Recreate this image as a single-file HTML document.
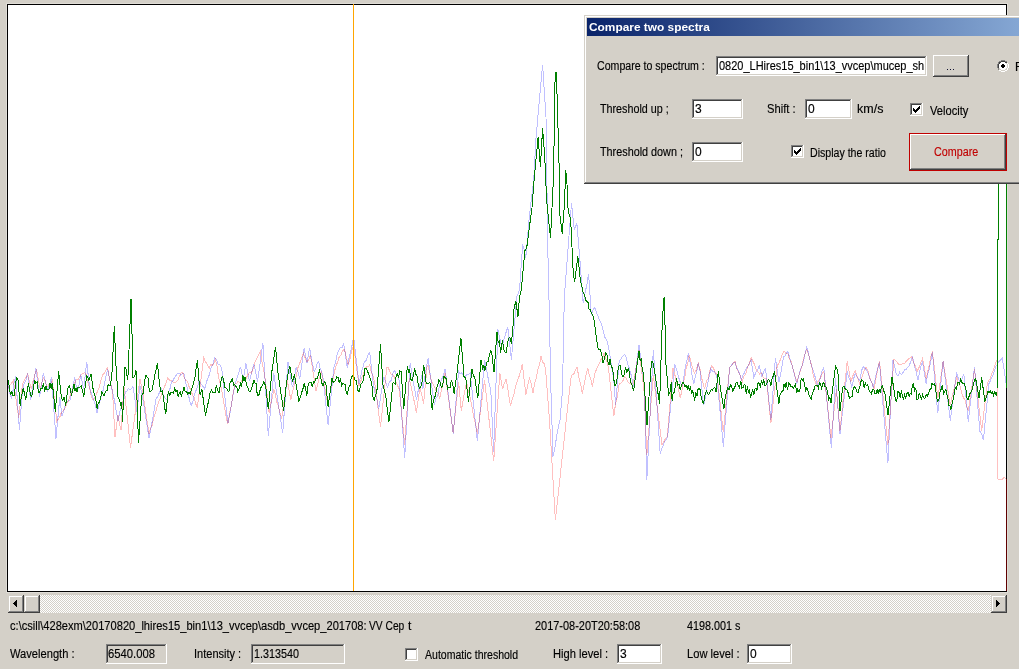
<!DOCTYPE html>
<html><head><meta charset="utf-8">
<style>
*{margin:0;padding:0}
html,body{width:1019px;height:669px;overflow:hidden;background:#d4d0c8;font-family:"Liberation Sans",sans-serif}
.t{position:absolute;white-space:pre;line-height:20px;transform-origin:0 0;-webkit-text-stroke:0.15px currentColor}
.tb{-webkit-text-stroke:0}
svg{position:absolute;left:0;top:0}
</style></head><body>
<svg width="1019" height="669" shape-rendering="crispEdges">
<defs>
<clipPath id="cp"><rect x="8" y="5" width="999" height="586"/></clipPath>
<pattern id="chk" x="0" y="0" width="2" height="2" patternUnits="userSpaceOnUse"><rect width="2" height="2" fill="#fff"/><rect width="1" height="1" fill="#d4d0c8"/><rect x="1" y="1" width="1" height="1" fill="#d4d0c8"/></pattern>
<linearGradient id="tg" gradientUnits="userSpaceOnUse" x1="587" y1="0" x2="1135" y2="0"><stop offset="0" stop-color="#0a246a"/><stop offset="1" stop-color="#a6caf0"/></linearGradient>
</defs>
<rect x="6" y="3" width="1002" height="590" fill="#e0ddd7"/><rect x="7" y="4" width="1000" height="588" fill="#000"/><rect x="8" y="5" width="998" height="586" fill="#fff"/>
<g clip-path="url(#cp)" fill="none" stroke-width="1" shape-rendering="crispEdges">
<g style="mix-blend-mode:multiply"><polyline points="7.5,380.0 9.3,390.8 11.2,398.0 12.7,392.7 14.2,382.0 15.7,376.6 19.4,429.6 22.4,390.8 24.1,383.4 25.9,380.7 27.6,373.6 30.6,399.8 32.4,390.3 34.1,379.5 35.9,368.4 39.6,396.8 43.3,373.6 44.8,378.6 46.3,385.5 47.8,390.8 49.6,384.5 51.5,377.4 56.0,438.6 59.8,396.8 62.0,416.2 63.5,412.1 65.0,405.9 66.5,402.8 68.3,401.0 70.2,399.8 71.7,391.9 73.2,385.8 74.7,377.4 76.2,386.1 77.7,390.8 79.2,384.4 80.7,374.4 82.2,382.0 83.7,389.3 86.7,361.7 89.6,387.8 91.1,392.7 92.6,397.0 94.1,401.2 95.6,406.2 97.1,413.2 98.6,406.9 100.1,400.2 101.6,394.4 103.1,390.3 104.6,382.6 106.1,376.0 107.6,369.1 109.4,377.9 111.3,386.3 113.0,393.8 114.7,401.6 116.3,411.4 118.0,420.7 119.8,412.0 121.7,406.2 123.6,400.9 125.4,391.7 126.9,391.4 128.4,388.4 130.0,390.2 131.5,388.8 133.0,386.6 136.8,412.0 140.0,385.6 142.7,398.2 149.0,437.7 150.8,428.8 152.6,419.6 154.3,409.1 156.1,398.2 157.9,396.4 159.7,391.6 161.5,389.2 163.3,394.7 165.1,398.2 166.9,400.0 168.4,392.6 169.9,389.0 171.4,382.0 173.0,380.6 174.6,377.4 176.1,375.4 177.7,373.1 179.3,373.3 180.8,375.2 182.4,373.8 184.0,374.0 185.8,383.2 187.6,389.1 189.3,399.1 191.1,405.4 192.7,402.0 194.3,395.2 196.0,390.6 197.6,386.9 199.2,380.2 201.0,384.1 202.8,386.1 204.6,389.2 206.2,382.9 207.9,378.0 209.6,374.3 211.2,366.9 212.8,364.7 214.5,357.8 216.3,359.3 218.1,364.4 219.8,364.5 221.6,367.7 227.9,423.3 229.7,415.3 231.5,404.4 233.3,393.7 235.1,383.8 236.9,378.2 238.7,373.1 240.5,366.8 243.2,380.2 245.9,363.2 247.7,372.5 249.5,381.1 251.7,371.8 253.9,364.1 255.7,371.9 257.5,382.0 262.9,342.6 268.3,435.9 273.7,373.1 282.7,433.2 288.0,362.3 289.5,370.7 291.1,380.8 292.6,387.4 294.4,378.0 296.1,367.7 297.9,371.8 299.7,379.3 304.2,348.0 306.9,363.2 309.6,348.0 311.1,357.0 312.6,364.4 314.1,371.3 315.6,369.6 317.1,363.5 318.6,361.4 320.1,368.0 321.6,371.0 323.1,378.4 328.1,425.1 333.8,367.7 335.3,362.9 336.8,356.0 338.3,351.5 340.1,347.7 341.9,347.7 343.7,343.5 347.3,367.7 348.9,358.3 350.5,352.1 352.0,345.6 353.6,336.3 359.0,383.8 360.8,375.6 362.5,368.3 364.3,362.3 366.1,360.5 367.9,355.4 369.7,352.4 373.3,383.8 375.1,393.1 376.9,398.7 378.7,409.0 380.5,397.7 382.3,386.2 384.1,376.7 385.9,382.7 387.7,387.4 389.5,381.5 391.2,380.7 393.0,372.8 394.8,370.4 396.3,374.9 397.8,375.6 399.3,381.1 404.7,458.0 410.1,363.2 411.7,371.4 413.2,382.9 414.8,389.4 416.4,400.0 418.2,390.6 420.0,383.8 421.8,374.9 422.7,389.2 424.5,379.8 426.2,368.4 428.0,358.7 428.1,358.7 434.4,405.4 435.9,398.3 437.5,396.8 439.0,388.2 440.5,382.5 442.0,378.5 443.6,374.3 445.1,368.6 453.2,434.0 458.6,371.3 460.2,373.8 461.8,372.9 463.3,375.4 464.9,377.6 466.7,374.2 468.4,374.4 470.2,373.1 477.4,441.3 484.6,359.6 486.2,368.3 487.7,375.8 489.2,384.0 490.8,390.0 493.6,452.0 497.9,329.2 499.7,338.3 501.5,345.4 503.1,342.3 504.6,337.2 506.2,331.8 507.8,327.4 511.4,359.7 516.8,296.9 519.5,290.0 522.7,244.5 524.2,250.1 525.8,257.9 529.3,216.7 533.8,179.0 535.9,139.7 539.2,101.6 542.6,64.6 546.0,117.3 547.1,200.0 548.2,270.0 549.1,303.2 550.9,390.0 553.0,456.5 554.8,448.0 556.5,437.5 558.2,427.5 560.0,420.0 562.5,390.0 564.3,296.9 571.5,203.2 574.2,229.2 576.9,223.8 579.6,256.1 583.2,303.2 585.0,293.1 586.8,285.0 588.6,273.6 591.3,314.9 593.0,309.8 594.8,307.7 596.4,312.3 598.0,315.9 599.7,320.7 601.3,323.5 602.9,329.2 603.0,330.0 604.8,337.2 606.6,339.8 608.4,346.1 613.8,380.2 615.6,405.4 619.2,360.5 621.0,358.8 622.8,356.0 624.6,354.2 626.1,356.8 627.6,363.4 629.1,367.7 630.6,372.8 632.1,379.1 633.6,387.4 639.0,345.3 644.3,383.8 646.8,480.0 653.3,349.7 660.2,454.0 661.7,448.5 663.2,445.4 664.7,441.5 666.2,440.1 667.7,435.9 674.8,364.1 676.6,369.5 678.4,376.8 680.2,382.0 682.0,385.6 683.6,379.5 685.1,368.4 686.7,361.2 688.3,353.3 690.1,362.5 691.9,374.0 693.7,383.8 695.2,377.4 696.7,371.3 698.2,363.2 700.0,371.3 703.6,405.4 705.4,397.0 707.2,386.0 709.0,377.5 710.8,368.6 712.3,371.0 713.9,371.1 715.5,373.5 717.0,377.6 723.3,446.6 729.6,367.7 731.4,365.5 733.2,362.5 735.0,362.3 736.6,367.7 738.1,370.2 739.7,374.1 741.3,380.2 742.9,375.5 744.6,372.3 746.2,368.8 747.8,366.5 749.5,362.9 751.1,359.6 753.8,377.6 755.6,372.9 757.4,370.4 759.2,365.9 761.9,376.7 763.7,371.5 765.5,368.6 770.9,419.7 775.4,357.8 778.9,382.0 780.4,375.3 781.9,367.1 783.4,356.9 784.9,356.0 786.4,353.0 787.9,351.5 789.4,356.9 790.9,362.6 792.4,365.9 793.9,372.7 795.4,378.5 796.9,383.8 798.7,376.3 800.5,369.6 802.3,365.0 803.8,360.2 805.3,352.5 806.8,347.0 808.6,353.6 810.3,361.7 812.1,367.0 813.9,373.1 815.7,378.5 817.5,385.6 819.1,383.1 820.6,376.1 822.2,370.3 823.8,367.7 831.4,448.3 835.5,378.4 840.0,434.0 847.2,371.3 848.7,377.4 850.2,380.4 851.7,387.4 853.5,379.5 855.2,373.1 856.7,376.8 858.2,378.5 859.7,380.2 862.4,367.7 863.9,366.7 865.4,369.3 866.9,370.4 868.5,374.3 870.0,378.8 871.6,382.0 873.2,387.4 874.8,381.5 876.4,373.1 877.9,367.7 879.5,362.3 887.9,463.2 892.9,359.6 894.7,366.7 896.5,374.8 898.1,376.1 899.6,372.2 901.2,374.5 902.8,373.0 904.4,370.0 906.0,369.7 907.5,367.2 909.1,365.9 910.9,361.3 912.6,356.9 914.4,365.7 916.2,372.0 918.0,380.2 919.5,372.4 921.0,366.2 922.5,361.4 926.1,383.8 927.7,374.3 929.2,369.5 930.8,360.8 932.4,352.4 937.8,413.4 943.1,361.4 950.3,420.6 956.6,372.2 958.4,378.9 960.2,382.0 962.0,378.8 963.8,374.0 968.3,421.5 974.5,366.8 979.9,431.3 981.6,433.7 983.4,440.0 988.9,383.8 990.7,380.0 992.5,376.0 994.3,371.3 996.1,365.9 997.6,363.9 999.2,361.3 1000.8,359.7 1002.3,357.8 1006.0,383.0" stroke="#c0c0ff"/></g>
<g style="mix-blend-mode:multiply"><polyline points="7.5,389.3 9.5,385.3 11.4,383.5 13.4,380.3 18.7,417.7 22.4,384.8 24.1,380.5 25.9,377.7 27.6,373.6 29.5,382.0 31.4,389.3 33.1,381.1 34.9,374.4 36.6,369.9 38.5,380.9 40.3,389.3 41.8,382.7 43.3,378.0 44.8,379.7 46.3,385.5 47.8,386.3 49.3,384.2 50.8,383.6 52.3,380.3 56.8,421.4 58.3,418.9 59.8,417.1 61.3,412.7 62.8,411.7 65.0,407.8 67.2,402.8 68.7,400.4 70.2,395.1 71.7,392.1 73.2,387.9 74.7,383.3 76.4,379.3 78.1,379.9 79.7,377.0 81.4,374.4 82.9,373.6 84.5,372.5 86.0,374.4 87.7,382.2 89.3,387.0 90.9,394.3 92.6,399.8 94.1,398.8 95.6,395.7 97.1,392.3 99.1,388.0 101.0,379.9 103.0,374.4 104.5,373.3 106.1,369.6 107.6,367.6 109.8,380.2 112.0,389.3 113.0,400.0 115.0,437.0 118.0,415.0 119.5,424.0 121.0,430.0 124.0,386.6 124.0,386.6 130.5,447.6 137.0,400.0 140.0,379.3 141.5,385.8 143.0,394.0 144.5,403.6 149.0,434.1 150.6,427.6 152.2,425.2 153.8,417.7 155.4,413.1 157.0,407.2 158.5,402.2 160.1,398.8 161.6,394.1 163.2,389.7 164.7,386.4 166.3,382.2 167.8,377.6 169.4,380.1 171.0,380.1 172.7,382.0 174.3,382.5 175.9,382.0 177.7,380.7 179.5,376.2 181.3,372.2 182.9,373.1 184.4,378.1 186.0,380.7 187.6,381.1 189.2,387.1 190.9,390.1 192.5,395.0 194.1,397.3 195.8,404.2 197.4,407.2 203.7,357.8 205.5,361.7 207.3,364.1 209.1,368.6 210.7,364.6 212.2,365.5 213.8,363.8 215.4,359.6 217.0,366.0 218.5,377.0 220.1,383.5 221.7,390.5 223.2,399.2 224.8,409.1 226.3,417.6 227.9,424.2 229.7,412.3 231.5,404.5 233.3,392.1 235.1,383.8 236.6,383.8 238.1,381.3 239.6,382.6 241.1,382.1 242.6,379.3 244.1,378.4 245.9,379.1 247.7,375.0 249.5,372.7 251.3,373.1 253.1,369.2 254.9,362.6 256.6,358.9 258.4,355.5 260.2,351.5 262.0,362.1 263.8,370.5 265.6,382.0 269.2,413.4 270.7,403.5 272.2,398.7 273.7,389.2 275.2,393.9 276.7,401.8 278.2,405.4 280.0,413.2 281.8,417.9 287.2,380.2 289.0,389.6 290.8,400.0 292.6,391.8 294.4,383.9 296.1,376.4 297.9,367.7 299.7,363.3 301.5,358.3 303.3,353.3 305.1,357.8 306.9,361.4 308.7,360.0 310.5,355.1 315.9,391.0 317.7,384.5 319.5,377.6 321.3,371.3 322.9,380.3 324.5,386.4 326.0,394.7 327.6,403.6 329.2,398.3 330.7,389.3 332.2,382.3 333.8,374.9 335.6,366.9 337.4,362.6 339.2,356.9 341.0,354.8 342.8,350.2 344.6,349.7 346.4,357.4 348.2,364.1 350.0,358.6 351.8,350.3 353.6,346.1 359.0,385.6 360.6,381.9 362.1,377.0 363.6,373.6 365.2,368.6 366.7,366.8 368.2,367.0 369.7,365.0 371.5,372.8 373.3,376.8 375.1,385.6 380.5,426.9 386.8,367.7 388.4,367.7 389.9,372.0 391.4,375.0 393.0,374.9 394.6,377.5 396.1,381.9 397.7,386.0 399.3,389.2 404.7,444.8 409.2,378.4 411.0,386.2 412.8,394.9 414.6,403.2 416.4,412.5 420.0,387.4 421.8,395.0 423.5,403.6 423.6,403.6 427.2,365.0 428.0,365.9 429.9,374.3 431.7,382.0 433.3,384.4 434.9,388.0 436.5,392.8 438.1,393.1 439.7,398.2 441.5,390.1 443.3,382.4 445.1,373.1 453.2,433.0 458.6,382.0 461.3,410.7 463.1,400.4 464.9,390.5 466.7,382.0 468.2,390.7 469.8,395.8 471.3,403.1 472.8,411.5 474.3,420.0 475.9,425.1 477.4,434.1 484.6,380.2 493.7,461.2 499.8,373.1 502.5,389.2 504.3,383.5 506.1,379.3 507.6,387.3 509.1,398.0 510.6,405.4 512.3,399.3 513.9,395.0 515.6,386.4 517.3,381.1 519.0,376.5 520.6,371.5 522.3,364.1 525.9,394.6 527.7,385.9 529.5,377.6 531.2,384.1 533.0,392.8 534.6,383.9 536.2,378.2 537.9,369.5 539.5,364.6 541.1,356.0 542.6,361.9 544.1,363.7 545.6,369.5 549.5,420.0 555.4,520.0 570.8,378.4 572.3,374.6 573.9,373.8 575.5,370.3 577.0,366.8 578.8,377.0 580.6,384.1 582.4,393.7 584.2,383.6 586.0,375.5 587.8,367.7 589.3,375.1 590.8,379.3 592.3,386.5 595.0,373.1 596.5,369.2 598.0,366.2 599.5,362.9 601.0,359.5 602.5,358.3 604.0,353.3 606.2,359.1 608.4,367.7 613.8,416.1 615.6,403.4 617.4,396.3 619.2,383.8 621.0,383.0 622.8,381.0 624.6,376.7 626.2,378.2 627.8,382.1 629.5,383.7 631.1,382.7 632.7,385.6 634.3,377.6 635.9,369.0 637.4,359.3 639.0,349.7 644.3,392.8 646.8,455.3 653.3,374.9 662.0,444.7 663.8,442.0 665.5,438.4 667.3,436.5 673.0,367.7 674.8,374.7 676.6,381.9 678.4,388.8 680.2,398.2 681.7,391.4 683.2,383.0 684.7,377.9 686.2,367.6 687.7,363.9 689.2,355.1 691.0,361.9 692.8,368.8 694.6,373.1 696.4,369.7 698.2,363.2 700.0,369.5 701.5,377.7 703.0,382.9 704.5,389.2 706.3,381.4 708.1,378.5 709.9,370.4 711.7,365.9 713.5,368.1 715.2,372.6 717.0,374.9 723.3,432.3 729.6,367.7 731.4,365.7 733.2,363.2 735.0,361.4 736.8,368.3 738.6,372.1 740.4,376.2 742.2,382.0 744.0,376.2 745.8,373.8 747.5,367.4 749.3,363.8 751.1,357.8 752.9,361.4 754.7,365.0 756.5,370.4 758.1,371.9 759.8,374.3 761.5,373.1 763.1,376.9 764.8,378.8 766.4,378.4 770.9,423.3 777.2,365.9 779.0,362.9 780.7,358.8 782.5,353.3 784.3,351.3 786.1,353.8 787.9,353.3 789.4,359.5 790.9,361.1 792.4,366.7 793.9,371.5 795.4,377.3 796.9,382.0 798.5,376.3 800.2,371.1 801.8,367.0 803.5,358.5 805.1,353.3 806.8,349.7 808.4,354.2 810.1,360.2 811.7,365.9 813.3,375.5 815.0,381.0 816.6,385.6 818.4,380.4 820.2,378.5 822.0,374.1 823.8,371.3 831.0,437.7 836.4,389.2 840.0,430.5 847.2,361.4 849.0,371.0 850.8,382.0 853.0,375.6 855.2,370.4 856.7,375.5 858.2,379.7 859.7,383.8 861.3,379.0 862.9,374.1 864.4,370.4 866.0,366.8 867.6,369.8 869.2,376.0 870.9,381.1 872.5,384.2 874.1,389.2 875.9,378.3 877.7,369.4 879.5,361.4 887.9,445.0 893.8,359.6 895.6,360.4 897.4,362.7 899.2,364.8 901.0,365.0 902.5,363.4 904.1,363.9 905.6,362.0 907.2,360.1 908.7,358.7 910.3,358.0 911.8,356.9 913.6,362.5 915.3,366.2 917.1,371.3 918.9,367.9 920.7,362.7 922.5,358.7 924.3,367.5 926.1,378.4 927.7,371.8 929.2,365.7 930.8,356.5 932.4,351.5 937.8,398.2 943.1,361.4 950.3,405.3 951.9,397.8 953.5,390.7 955.0,385.3 956.6,376.6 958.3,383.2 959.9,385.8 961.6,392.8 963.3,397.2 965.0,400.0 966.6,405.7 968.3,410.7 974.5,369.5 981.7,430.5 987.1,385.6 988.6,380.1 990.1,378.8 991.6,374.1 993.1,371.0 994.6,366.6 996.1,361.4 997.4,360.0 997.4,478.8 999.1,479.5 1000.8,479.7 1002.6,479.1 1004.3,477.2 1006.0,478.8 1006.0,591.0" stroke="#ffc0c0"/></g>
<polyline points="7.5,378.8 8.6,381.1 9.7,390.8 10.8,394.6 12.0,391.5 13.1,396.0 14.2,395.3 16.4,378.0 17.9,378.8 20.2,405.7 21.2,397.3 22.2,393.7 23.2,387.8 24.4,393.3 25.7,399.8 28.4,383.3 29.8,391.6 31.1,396.8 32.4,394.4 33.6,386.3 34.8,380.7 35.9,383.3 37.1,381.6 38.4,392.7 39.6,392.3 40.8,388.6 42.1,388.9 43.3,383.3 44.8,391.5 45.8,385.8 46.8,389.5 47.8,389.3 48.9,389.8 50.0,383.2 51.2,388.7 52.3,382.6 55.3,411.7 58.6,371.4 61.3,396.8 62.8,400.8 64.2,396.8 65.7,405.7 68.0,387.8 69.1,385.8 70.3,388.5 71.4,396.0 72.7,390.4 74.0,384.0 75.0,390.9 76.0,387.8 77.0,391.5 78.0,387.2 79.0,387.7 80.0,387.0 81.2,385.6 82.5,390.8 83.7,396.8 86.7,375.9 87.8,377.5 88.9,380.3 90.0,376.9 91.1,373.6 93.4,391.5 94.6,394.6 95.9,400.3 97.1,408.7 98.3,402.9 99.5,402.3 100.6,397.7 101.8,392.0 103.0,393.8 104.0,396.2 105.1,392.4 106.1,390.8 107.1,390.5 108.1,384.2 109.1,385.6 110.4,385.7 111.8,375.9 114.3,326.3 115.8,362.4 118.0,396.8 119.5,399.8 120.7,404.9 121.8,402.8 122.5,422.2 124.8,367.6 125.8,368.0 126.8,374.4 127.8,380.3 131.0,298.8 132.2,340.0 133.0,377.4 134.0,377.3 135.0,375.0 136.0,370.6 138.5,442.8 141.8,394.6 142.0,395.3 143.2,393.2 144.5,381.6 145.7,375.9 146.3,375.8 148.1,378.4 149.4,391.5 150.8,391.0 152.0,390.1 153.2,384.3 154.4,378.4 155.4,371.4 156.4,369.1 157.4,363.2 159.7,385.6 161.1,392.1 162.4,391.0 165.7,414.3 168.4,391.0 169.7,395.1 171.0,392.3 172.3,392.8 173.5,393.4 174.7,387.5 175.9,391.9 177.0,390.2 178.1,396.7 179.1,393.7 180.2,392.2 181.3,396.4 182.7,392.4 184.0,387.4 185.3,391.7 186.7,391.9 187.9,394.5 189.0,392.4 190.2,394.6 191.4,389.8 192.6,386.3 193.8,382.0 195.0,377.6 196.2,367.9 197.4,360.5 200.1,394.6 201.9,389.2 205.5,416.1 206.7,409.1 207.9,404.1 209.1,398.2 210.3,391.7 211.5,390.0 212.7,392.8 213.9,392.4 215.1,392.8 216.3,385.6 217.7,390.1 219.0,392.8 220.2,386.4 221.3,378.8 222.5,376.7 223.6,379.6 224.7,387.2 225.7,388.0 226.8,388.5 227.9,391.0 229.0,391.5 230.2,382.0 231.3,381.7 232.4,378.4 233.5,385.6 234.6,384.6 235.6,386.1 236.7,386.9 237.8,391.9 239.2,388.3 240.5,383.8 241.6,386.6 242.8,375.3 243.9,381.3 245.0,376.7 246.1,382.9 247.2,386.6 248.2,388.2 249.3,392.0 250.4,391.9 251.6,388.2 252.7,384.7 253.9,380.2 255.0,383.3 256.1,383.4 257.3,395.4 258.4,395.5 259.5,393.5 260.6,387.1 261.6,387.4 262.7,384.5 263.8,382.0 265.6,385.6 268.3,409.0 271.9,371.3 275.5,347.0 278.2,374.9 283.6,410.7 286.2,385.6 287.4,377.6 288.6,370.9 289.8,365.9 291.2,374.3 292.6,382.0 294.4,374.0 298.8,400.9 300.1,398.1 301.5,392.8 302.9,389.0 304.2,382.9 305.5,388.8 306.9,395.5 308.2,384.0 309.6,382.0 311.0,382.0 312.3,387.4 313.5,381.2 314.7,382.2 315.9,378.4 317.1,379.0 318.3,375.5 319.5,369.5 320.7,377.8 321.9,383.4 323.1,385.6 324.5,381.8 325.8,382.9 328.1,407.2 332.0,378.4 333.2,382.4 334.4,381.3 335.6,380.2 336.8,376.9 338.0,377.2 339.2,382.9 340.4,378.3 341.6,386.1 342.8,383.8 343.9,383.8 345.1,384.8 346.2,392.5 347.3,393.7 348.6,388.1 350.0,385.6 351.2,378.0 352.4,375.7 353.6,375.8 354.7,379.9 355.9,380.1 357.0,384.9 358.1,391.0 359.2,391.1 360.3,386.5 361.4,383.1 362.5,382.9 363.7,377.9 364.9,368.6 366.1,368.6 367.3,370.5 368.5,373.8 369.7,377.6 370.8,380.1 371.9,384.9 373.1,398.4 374.2,400.0 375.5,395.6 376.9,391.0 380.5,344.4 383.2,388.3 384.5,389.9 385.9,397.3 388.9,422.4 393.0,382.9 394.1,382.9 395.2,384.0 396.2,374.9 397.3,373.8 398.4,377.6 399.8,370.9 401.1,371.3 403.8,409.0 407.4,365.9 408.5,371.9 409.6,370.1 410.8,379.3 411.9,381.1 413.2,376.6 414.6,368.6 415.8,374.1 417.0,375.9 418.2,383.8 419.4,388.6 420.6,386.8 421.8,383.8 423.5,365.9 423.9,365.9 426.2,382.9 426.3,383.8 427.6,383.5 429.0,382.9 430.0,382.9 432.2,409.8 433.3,401.2 434.4,398.2 435.5,395.2 436.6,388.1 437.7,385.5 438.8,380.2 440.1,382.0 441.5,387.4 442.7,385.4 443.9,376.5 445.1,377.6 446.3,378.9 447.5,388.8 448.7,387.4 450.0,387.6 451.4,380.2 452.8,385.0 454.1,393.7 456.8,374.9 460.9,338.1 464.0,376.7 465.8,378.4 468.4,401.8 472.0,368.6 473.4,376.2 474.7,376.7 477.8,398.2 481.0,360.5 482.7,368.7 483.8,365.4 484.9,370.2 485.9,366.8 487.0,362.1 488.1,361.5 489.3,356.0 490.5,350.6 491.7,352.5 494.0,372.3 497.0,331.9 498.2,342.6 499.4,341.0 500.6,352.5 502.4,340.0 503.8,349.4 505.1,352.5 506.3,352.4 507.5,343.7 508.7,338.2 510.0,337.6 511.4,343.6 513.2,323.8 514.1,307.7 515.9,301.4 518.0,316.7 519.5,296.9 521.3,290.0 524.9,250.7 526.1,249.0 527.2,244.7 528.4,234.6 532.0,207.7 533.6,185.6 535.9,159.9 538.1,137.4 540.4,166.6 542.6,128.5 544.8,157.6 546.6,200.0 550.5,238.2 553.6,175.4 554.6,104.0 555.2,72.4 556.4,72.4 557.4,107.0 558.4,140.0 559.2,170.0 559.9,214.9 562.2,233.7 564.3,205.9 565.8,170.0 567.0,184.4 567.9,207.7 569.2,215.1 570.6,218.4 573.3,274.1 574.7,281.7 577.8,256.1 580.5,281.2 581.9,286.9 583.2,292.4 584.5,295.2 585.9,300.5 587.0,301.5 588.1,302.6 589.1,309.8 590.2,309.9 591.3,313.1 592.5,314.2 593.6,317.5 594.8,325.6 597.7,347.0 599.0,350.0 600.4,349.7 601.8,354.4 603.1,363.2 604.5,358.2 605.8,353.3 606.9,354.1 607.9,362.1 609.0,364.9 610.0,358.6 611.1,365.9 612.2,367.8 613.4,374.0 614.5,385.5 615.6,385.6 616.8,381.6 618.0,370.3 619.2,365.0 620.4,366.0 621.6,374.5 622.8,376.7 624.1,375.1 625.5,366.8 626.9,372.0 628.2,368.6 629.3,371.5 630.4,381.4 631.4,383.9 632.5,386.4 633.6,391.0 639.0,350.6 640.1,361.1 641.2,359.2 642.3,369.7 643.4,373.1 647.0,425.1 651.5,361.4 652.7,361.7 653.9,367.1 655.1,374.9 659.6,403.6 662.0,330.0 662.5,324.0 663.5,299.0 664.5,297.0 665.0,325.0 665.6,340.0 665.9,363.2 668.6,394.6 670.0,392.4 671.3,382.0 672.1,400.9 673.2,392.4 674.4,392.2 675.5,385.0 676.6,378.4 677.8,385.4 679.0,384.3 680.2,389.2 681.4,385.5 682.6,382.9 683.8,382.9 684.9,387.0 686.0,384.8 687.2,388.8 688.3,384.7 689.3,391.3 690.4,386.5 691.5,393.3 692.5,391.5 693.5,393.6 694.6,400.9 695.8,392.4 697.0,396.2 698.2,388.3 700.0,389.2 701.2,396.9 702.4,402.1 703.6,403.6 705.4,392.8 706.5,391.0 707.6,393.5 708.8,394.9 709.9,391.9 711.1,389.5 712.3,390.2 713.5,388.3 714.8,387.3 716.1,391.9 718.3,371.3 720.6,389.2 723.9,409.0 725.2,397.6 726.5,392.3 727.8,387.4 729.1,390.0 730.5,384.7 731.7,386.5 732.9,391.4 734.1,388.3 735.2,386.1 736.2,382.5 737.3,382.9 738.5,386.7 739.6,388.0 740.8,380.7 741.9,388.2 743.1,387.4 744.2,384.2 745.2,385.4 746.3,394.0 747.3,386.4 748.4,391.9 749.5,389.8 750.6,397.9 751.6,392.7 752.7,390.2 753.8,394.6 754.9,389.1 756.0,387.7 757.0,390.6 758.1,382.0 759.2,383.8 760.3,386.8 761.5,380.3 762.6,385.1 763.7,379.3 765.0,386.1 766.4,384.7 768.2,379.3 769.5,380.4 770.9,385.6 772.1,378.4 773.3,375.8 774.5,371.3 778.9,403.6 780.2,393.8 781.6,391.9 782.8,391.9 784.0,384.3 785.2,387.4 786.3,381.6 787.5,390.4 788.6,382.7 789.7,383.8 790.9,386.3 792.1,386.3 793.3,388.3 794.4,386.7 795.5,384.4 796.7,393.1 797.8,389.2 798.9,391.6 800.0,389.4 801.2,378.6 802.3,380.2 803.4,379.2 804.5,385.0 805.7,390.4 806.8,387.4 807.9,390.8 809.0,395.1 810.2,397.8 811.3,399.1 812.5,392.5 813.6,391.1 814.8,386.5 816.0,385.2 817.2,385.2 818.4,388.3 819.5,383.0 820.6,383.9 821.6,389.9 822.7,383.5 823.8,382.9 825.1,386.7 826.5,387.4 827.6,392.7 828.8,399.5 829.9,397.8 831.0,402.7 835.5,365.9 836.9,368.5 838.2,374.9 840.0,410.7 842.7,387.4 844.0,386.6 845.4,389.2 846.8,389.2 848.1,392.8 849.5,398.5 850.8,397.3 852.1,396.3 853.5,387.4 854.6,386.8 855.7,388.4 856.8,391.9 857.9,392.8 859.1,389.1 860.3,384.8 861.5,379.3 862.9,380.8 864.2,387.4 865.3,383.1 866.5,385.7 867.6,384.5 868.7,389.2 870.0,392.0 871.4,393.7 872.6,389.4 873.8,389.5 875.0,393.7 876.0,394.0 877.1,389.5 878.1,393.5 879.2,389.4 880.2,392.1 881.3,387.4 882.5,385.7 883.6,391.0 884.8,392.8 888.1,415.2 892.0,376.6 895.6,400.9 896.8,401.1 898.0,391.3 899.2,392.8 900.3,397.7 901.4,390.3 902.4,396.6 903.5,399.1 904.6,394.6 905.7,398.3 906.9,393.7 908.0,392.0 909.1,396.4 910.2,393.4 911.3,394.3 912.4,384.9 913.5,383.8 914.6,391.6 915.8,387.9 916.9,399.4 918.0,399.1 919.1,393.3 920.2,395.0 921.4,399.8 922.5,394.6 923.7,397.6 924.9,398.7 926.1,394.6 927.3,396.2 928.5,393.5 929.7,389.2 930.8,389.7 932.0,383.3 933.1,384.5 934.2,383.8 935.4,386.3 936.6,397.9 937.8,401.7 939.0,399.2 940.1,390.9 941.3,389.2 942.4,384.8 943.5,393.8 944.7,392.3 945.8,389.2 946.8,393.8 947.8,397.9 948.9,405.1 949.9,405.2 950.9,409.8 952.0,404.3 953.1,399.2 954.2,393.9 955.3,387.1 956.4,388.8 957.5,382.9 958.6,382.2 959.7,384.0 960.7,379.1 961.8,382.2 962.9,383.8 964.0,383.2 965.1,386.2 966.1,390.6 967.2,399.3 968.3,399.1 969.4,395.2 970.5,392.3 971.6,391.4 972.7,387.4 973.9,382.6 975.1,378.3 976.3,381.1 979.0,398.2 981.7,377.5 984.9,401.7 985.9,398.4 987.0,394.6 988.0,391.0 989.1,392.7 990.2,390.8 991.4,393.5 992.5,391.9 993.6,395.2 994.8,391.3 995.9,394.9 997.0,396.0 997.5,239.0 998.7,239.0 998.7,150.0 1000.0,100.0 1001.0,99.8 1002.0,97.3 1003.0,99.1 1004.0,100.6 1005.0,100.0 1006.5,190.0 1006.5,387.8" stroke="#008000"/>
</g>
<rect x="353" y="4" width="1" height="587" fill="#ffa500"/>
<rect x="1006" y="479" width="1" height="112" fill="#600000"/>
<rect x="8" y="595" width="999" height="18" fill="url(#chk)"/><rect x="8" y="595" width="16" height="18" fill="#d4d0c8"/><rect x="8" y="595" width="15" height="1" fill="#d4d0c8"/><rect x="8" y="595" width="1" height="17" fill="#d4d0c8"/><rect x="9" y="596" width="13" height="1" fill="#fff"/><rect x="9" y="596" width="1" height="15" fill="#fff"/><rect x="8" y="612" width="16" height="1" fill="#404040"/><rect x="23" y="595" width="1" height="18" fill="#404040"/><rect x="9" y="611" width="14" height="1" fill="#808080"/><rect x="22" y="596" width="1" height="16" fill="#808080"/><rect x="16" y="600" width="1" height="1" fill="#000"/><rect x="15" y="601" width="1" height="1" fill="#000"/><rect x="16" y="601" width="1" height="1" fill="#000"/><rect x="14" y="602" width="1" height="1" fill="#000"/><rect x="15" y="602" width="1" height="1" fill="#000"/><rect x="16" y="602" width="1" height="1" fill="#000"/><rect x="13" y="603" width="1" height="1" fill="#000"/><rect x="14" y="603" width="1" height="1" fill="#000"/><rect x="15" y="603" width="1" height="1" fill="#000"/><rect x="16" y="603" width="1" height="1" fill="#000"/><rect x="14" y="604" width="1" height="1" fill="#000"/><rect x="15" y="604" width="1" height="1" fill="#000"/><rect x="16" y="604" width="1" height="1" fill="#000"/><rect x="15" y="605" width="1" height="1" fill="#000"/><rect x="16" y="605" width="1" height="1" fill="#000"/><rect x="16" y="606" width="1" height="1" fill="#000"/><rect x="24" y="595" width="16" height="18" fill="#d4d0c8"/><rect x="24" y="595" width="15" height="1" fill="#d4d0c8"/><rect x="24" y="595" width="1" height="17" fill="#d4d0c8"/><rect x="25" y="596" width="13" height="1" fill="#fff"/><rect x="25" y="596" width="1" height="15" fill="#fff"/><rect x="24" y="612" width="16" height="1" fill="#404040"/><rect x="39" y="595" width="1" height="18" fill="#404040"/><rect x="25" y="611" width="14" height="1" fill="#808080"/><rect x="38" y="596" width="1" height="16" fill="#808080"/><rect x="991" y="595" width="16" height="18" fill="#d4d0c8"/><rect x="991" y="595" width="15" height="1" fill="#d4d0c8"/><rect x="991" y="595" width="1" height="17" fill="#d4d0c8"/><rect x="992" y="596" width="13" height="1" fill="#fff"/><rect x="992" y="596" width="1" height="15" fill="#fff"/><rect x="991" y="612" width="16" height="1" fill="#404040"/><rect x="1006" y="595" width="1" height="18" fill="#404040"/><rect x="992" y="611" width="14" height="1" fill="#808080"/><rect x="1005" y="596" width="1" height="16" fill="#808080"/><rect x="996" y="600" width="1" height="1" fill="#000"/><rect x="996" y="601" width="1" height="1" fill="#000"/><rect x="997" y="601" width="1" height="1" fill="#000"/><rect x="996" y="602" width="1" height="1" fill="#000"/><rect x="997" y="602" width="1" height="1" fill="#000"/><rect x="998" y="602" width="1" height="1" fill="#000"/><rect x="996" y="603" width="1" height="1" fill="#000"/><rect x="997" y="603" width="1" height="1" fill="#000"/><rect x="998" y="603" width="1" height="1" fill="#000"/><rect x="999" y="603" width="1" height="1" fill="#000"/><rect x="996" y="604" width="1" height="1" fill="#000"/><rect x="997" y="604" width="1" height="1" fill="#000"/><rect x="998" y="604" width="1" height="1" fill="#000"/><rect x="996" y="605" width="1" height="1" fill="#000"/><rect x="997" y="605" width="1" height="1" fill="#000"/><rect x="996" y="606" width="1" height="1" fill="#000"/><rect x="106" y="644" width="61" height="20" fill="#d4d0c8"/><rect x="106" y="644" width="60" height="1" fill="#808080"/><rect x="106" y="644" width="1" height="19" fill="#808080"/><rect x="107" y="645" width="58" height="1" fill="#404040"/><rect x="107" y="645" width="1" height="17" fill="#404040"/><rect x="106" y="663" width="61" height="1" fill="#fff"/><rect x="166" y="644" width="1" height="20" fill="#fff"/><rect x="107" y="662" width="59" height="1" fill="#d4d0c8"/><rect x="165" y="645" width="1" height="18" fill="#d4d0c8"/><rect x="251" y="644" width="94" height="20" fill="#d4d0c8"/><rect x="251" y="644" width="93" height="1" fill="#808080"/><rect x="251" y="644" width="1" height="19" fill="#808080"/><rect x="252" y="645" width="91" height="1" fill="#404040"/><rect x="252" y="645" width="1" height="17" fill="#404040"/><rect x="251" y="663" width="94" height="1" fill="#fff"/><rect x="344" y="644" width="1" height="20" fill="#fff"/><rect x="252" y="662" width="92" height="1" fill="#d4d0c8"/><rect x="343" y="645" width="1" height="18" fill="#d4d0c8"/><rect x="405" y="648" width="13" height="13" fill="#fff"/><rect x="405" y="648" width="12" height="1" fill="#808080"/><rect x="405" y="648" width="1" height="12" fill="#808080"/><rect x="406" y="649" width="10" height="1" fill="#404040"/><rect x="406" y="649" width="1" height="10" fill="#404040"/><rect x="405" y="660" width="13" height="1" fill="#fff"/><rect x="417" y="648" width="1" height="13" fill="#fff"/><rect x="406" y="659" width="11" height="1" fill="#d4d0c8"/><rect x="416" y="649" width="1" height="11" fill="#d4d0c8"/><rect x="617" y="644" width="45" height="20" fill="#fff"/><rect x="617" y="644" width="44" height="1" fill="#808080"/><rect x="617" y="644" width="1" height="19" fill="#808080"/><rect x="618" y="645" width="42" height="1" fill="#404040"/><rect x="618" y="645" width="1" height="17" fill="#404040"/><rect x="617" y="663" width="45" height="1" fill="#fff"/><rect x="661" y="644" width="1" height="20" fill="#fff"/><rect x="618" y="662" width="43" height="1" fill="#d4d0c8"/><rect x="660" y="645" width="1" height="18" fill="#d4d0c8"/><rect x="747" y="644" width="45" height="20" fill="#fff"/><rect x="747" y="644" width="44" height="1" fill="#808080"/><rect x="747" y="644" width="1" height="19" fill="#808080"/><rect x="748" y="645" width="42" height="1" fill="#404040"/><rect x="748" y="645" width="1" height="17" fill="#404040"/><rect x="747" y="663" width="45" height="1" fill="#fff"/><rect x="791" y="644" width="1" height="20" fill="#fff"/><rect x="748" y="662" width="43" height="1" fill="#d4d0c8"/><rect x="790" y="645" width="1" height="18" fill="#d4d0c8"/>
<rect x="584" y="15" width="435" height="169" fill="#d4d0c8"/><rect x="585" y="16" width="434" height="1" fill="#fff"/><rect x="585" y="16" width="1" height="166" fill="#fff"/><rect x="585" y="182" width="434" height="1" fill="#808080"/><rect x="584" y="183" width="435" height="1" fill="#404040"/><rect x="587" y="18" width="432" height="18" fill="url(#tg)"/><rect x="716" y="56" width="211" height="20" fill="#fff"/><rect x="716" y="56" width="210" height="1" fill="#808080"/><rect x="716" y="56" width="1" height="19" fill="#808080"/><rect x="717" y="57" width="208" height="1" fill="#404040"/><rect x="717" y="57" width="1" height="17" fill="#404040"/><rect x="716" y="75" width="211" height="1" fill="#fff"/><rect x="926" y="56" width="1" height="20" fill="#fff"/><rect x="717" y="74" width="209" height="1" fill="#d4d0c8"/><rect x="925" y="57" width="1" height="18" fill="#d4d0c8"/><rect x="933" y="55" width="36" height="22" fill="#d4d0c8"/><rect x="933" y="55" width="35" height="1" fill="#fff"/><rect x="933" y="55" width="1" height="21" fill="#fff"/><rect x="934" y="56" width="33" height="1" fill="#d4d0c8"/><rect x="934" y="56" width="1" height="19" fill="#d4d0c8"/><rect x="933" y="76" width="36" height="1" fill="#404040"/><rect x="968" y="55" width="1" height="22" fill="#404040"/><rect x="934" y="75" width="34" height="1" fill="#808080"/><rect x="967" y="56" width="1" height="20" fill="#808080"/><g fill="#101030"><rect x="947" y="69" width="1" height="1"/><rect x="950" y="69" width="1" height="1"/><rect x="953" y="69" width="1" height="1"/></g><rect x="1001" y="60" width="1" height="1" fill="#808080"/><rect x="1002" y="60" width="1" height="1" fill="#808080"/><rect x="1003" y="60" width="1" height="1" fill="#808080"/><rect x="1004" y="60" width="1" height="1" fill="#808080"/><rect x="999" y="61" width="1" height="1" fill="#808080"/><rect x="1000" y="61" width="1" height="1" fill="#808080"/><rect x="1001" y="61" width="1" height="1" fill="#404040"/><rect x="1002" y="61" width="1" height="1" fill="#404040"/><rect x="1003" y="61" width="1" height="1" fill="#404040"/><rect x="1004" y="61" width="1" height="1" fill="#404040"/><rect x="1005" y="61" width="1" height="1" fill="#808080"/><rect x="1006" y="61" width="1" height="1" fill="#808080"/><rect x="998" y="62" width="1" height="1" fill="#808080"/><rect x="999" y="62" width="1" height="1" fill="#404040"/><rect x="1000" y="62" width="1" height="1" fill="#404040"/><rect x="1001" y="62" width="1" height="1" fill="#fff"/><rect x="1002" y="62" width="1" height="1" fill="#fff"/><rect x="1003" y="62" width="1" height="1" fill="#fff"/><rect x="1004" y="62" width="1" height="1" fill="#fff"/><rect x="1005" y="62" width="1" height="1" fill="#404040"/><rect x="1006" y="62" width="1" height="1" fill="#404040"/><rect x="1007" y="62" width="1" height="1" fill="#d4d0c8"/><rect x="998" y="63" width="1" height="1" fill="#808080"/><rect x="999" y="63" width="1" height="1" fill="#404040"/><rect x="1000" y="63" width="1" height="1" fill="#fff"/><rect x="1001" y="63" width="1" height="1" fill="#fff"/><rect x="1002" y="63" width="1" height="1" fill="#fff"/><rect x="1003" y="63" width="1" height="1" fill="#fff"/><rect x="1004" y="63" width="1" height="1" fill="#fff"/><rect x="1005" y="63" width="1" height="1" fill="#fff"/><rect x="1006" y="63" width="1" height="1" fill="#d4d0c8"/><rect x="1007" y="63" width="1" height="1" fill="#fff"/><rect x="997" y="64" width="1" height="1" fill="#808080"/><rect x="998" y="64" width="1" height="1" fill="#404040"/><rect x="999" y="64" width="1" height="1" fill="#fff"/><rect x="1000" y="64" width="1" height="1" fill="#fff"/><rect x="1001" y="64" width="1" height="1" fill="#fff"/><rect x="1002" y="64" width="1" height="1" fill="#fff"/><rect x="1003" y="64" width="1" height="1" fill="#fff"/><rect x="1004" y="64" width="1" height="1" fill="#fff"/><rect x="1005" y="64" width="1" height="1" fill="#fff"/><rect x="1006" y="64" width="1" height="1" fill="#fff"/><rect x="1007" y="64" width="1" height="1" fill="#d4d0c8"/><rect x="1008" y="64" width="1" height="1" fill="#fff"/><rect x="997" y="65" width="1" height="1" fill="#808080"/><rect x="998" y="65" width="1" height="1" fill="#404040"/><rect x="999" y="65" width="1" height="1" fill="#fff"/><rect x="1000" y="65" width="1" height="1" fill="#fff"/><rect x="1001" y="65" width="1" height="1" fill="#fff"/><rect x="1002" y="65" width="1" height="1" fill="#fff"/><rect x="1003" y="65" width="1" height="1" fill="#fff"/><rect x="1004" y="65" width="1" height="1" fill="#fff"/><rect x="1005" y="65" width="1" height="1" fill="#fff"/><rect x="1006" y="65" width="1" height="1" fill="#fff"/><rect x="1007" y="65" width="1" height="1" fill="#d4d0c8"/><rect x="1008" y="65" width="1" height="1" fill="#fff"/><rect x="997" y="66" width="1" height="1" fill="#808080"/><rect x="998" y="66" width="1" height="1" fill="#404040"/><rect x="999" y="66" width="1" height="1" fill="#fff"/><rect x="1000" y="66" width="1" height="1" fill="#fff"/><rect x="1001" y="66" width="1" height="1" fill="#fff"/><rect x="1002" y="66" width="1" height="1" fill="#fff"/><rect x="1003" y="66" width="1" height="1" fill="#fff"/><rect x="1004" y="66" width="1" height="1" fill="#fff"/><rect x="1005" y="66" width="1" height="1" fill="#fff"/><rect x="1006" y="66" width="1" height="1" fill="#fff"/><rect x="1007" y="66" width="1" height="1" fill="#d4d0c8"/><rect x="1008" y="66" width="1" height="1" fill="#fff"/><rect x="997" y="67" width="1" height="1" fill="#808080"/><rect x="998" y="67" width="1" height="1" fill="#404040"/><rect x="999" y="67" width="1" height="1" fill="#fff"/><rect x="1000" y="67" width="1" height="1" fill="#fff"/><rect x="1001" y="67" width="1" height="1" fill="#fff"/><rect x="1002" y="67" width="1" height="1" fill="#fff"/><rect x="1003" y="67" width="1" height="1" fill="#fff"/><rect x="1004" y="67" width="1" height="1" fill="#fff"/><rect x="1005" y="67" width="1" height="1" fill="#fff"/><rect x="1006" y="67" width="1" height="1" fill="#fff"/><rect x="1007" y="67" width="1" height="1" fill="#d4d0c8"/><rect x="1008" y="67" width="1" height="1" fill="#fff"/><rect x="998" y="68" width="1" height="1" fill="#808080"/><rect x="999" y="68" width="1" height="1" fill="#d4d0c8"/><rect x="1000" y="68" width="1" height="1" fill="#fff"/><rect x="1001" y="68" width="1" height="1" fill="#fff"/><rect x="1002" y="68" width="1" height="1" fill="#fff"/><rect x="1003" y="68" width="1" height="1" fill="#fff"/><rect x="1004" y="68" width="1" height="1" fill="#fff"/><rect x="1005" y="68" width="1" height="1" fill="#fff"/><rect x="1006" y="68" width="1" height="1" fill="#d4d0c8"/><rect x="1007" y="68" width="1" height="1" fill="#fff"/><rect x="998" y="69" width="1" height="1" fill="#808080"/><rect x="999" y="69" width="1" height="1" fill="#d4d0c8"/><rect x="1000" y="69" width="1" height="1" fill="#d4d0c8"/><rect x="1001" y="69" width="1" height="1" fill="#fff"/><rect x="1002" y="69" width="1" height="1" fill="#fff"/><rect x="1003" y="69" width="1" height="1" fill="#fff"/><rect x="1004" y="69" width="1" height="1" fill="#fff"/><rect x="1005" y="69" width="1" height="1" fill="#d4d0c8"/><rect x="1006" y="69" width="1" height="1" fill="#d4d0c8"/><rect x="1007" y="69" width="1" height="1" fill="#fff"/><rect x="999" y="70" width="1" height="1" fill="#fff"/><rect x="1000" y="70" width="1" height="1" fill="#fff"/><rect x="1001" y="70" width="1" height="1" fill="#d4d0c8"/><rect x="1002" y="70" width="1" height="1" fill="#d4d0c8"/><rect x="1003" y="70" width="1" height="1" fill="#d4d0c8"/><rect x="1004" y="70" width="1" height="1" fill="#d4d0c8"/><rect x="1005" y="70" width="1" height="1" fill="#fff"/><rect x="1006" y="70" width="1" height="1" fill="#fff"/><rect x="1001" y="71" width="1" height="1" fill="#fff"/><rect x="1002" y="71" width="1" height="1" fill="#fff"/><rect x="1003" y="71" width="1" height="1" fill="#fff"/><rect x="1004" y="71" width="1" height="1" fill="#fff"/><rect x="1002" y="64" width="1" height="1" fill="#000"/><rect x="1003" y="64" width="1" height="1" fill="#000"/><rect x="1001" y="65" width="1" height="1" fill="#000"/><rect x="1002" y="65" width="1" height="1" fill="#000"/><rect x="1003" y="65" width="1" height="1" fill="#000"/><rect x="1004" y="65" width="1" height="1" fill="#000"/><rect x="1001" y="66" width="1" height="1" fill="#000"/><rect x="1002" y="66" width="1" height="1" fill="#000"/><rect x="1003" y="66" width="1" height="1" fill="#000"/><rect x="1004" y="66" width="1" height="1" fill="#000"/><rect x="1002" y="67" width="1" height="1" fill="#000"/><rect x="1003" y="67" width="1" height="1" fill="#000"/><rect x="692" y="99" width="51" height="20" fill="#fff"/><rect x="692" y="99" width="50" height="1" fill="#808080"/><rect x="692" y="99" width="1" height="19" fill="#808080"/><rect x="693" y="100" width="48" height="1" fill="#404040"/><rect x="693" y="100" width="1" height="17" fill="#404040"/><rect x="692" y="118" width="51" height="1" fill="#fff"/><rect x="742" y="99" width="1" height="20" fill="#fff"/><rect x="693" y="117" width="49" height="1" fill="#d4d0c8"/><rect x="741" y="100" width="1" height="18" fill="#d4d0c8"/><rect x="805" y="99" width="47" height="20" fill="#fff"/><rect x="805" y="99" width="46" height="1" fill="#808080"/><rect x="805" y="99" width="1" height="19" fill="#808080"/><rect x="806" y="100" width="44" height="1" fill="#404040"/><rect x="806" y="100" width="1" height="17" fill="#404040"/><rect x="805" y="118" width="47" height="1" fill="#fff"/><rect x="851" y="99" width="1" height="20" fill="#fff"/><rect x="806" y="117" width="45" height="1" fill="#d4d0c8"/><rect x="850" y="100" width="1" height="18" fill="#d4d0c8"/><rect x="910" y="103" width="13" height="13" fill="#fff"/><rect x="910" y="103" width="12" height="1" fill="#808080"/><rect x="910" y="103" width="1" height="12" fill="#808080"/><rect x="911" y="104" width="10" height="1" fill="#404040"/><rect x="911" y="104" width="1" height="10" fill="#404040"/><rect x="910" y="115" width="13" height="1" fill="#fff"/><rect x="922" y="103" width="1" height="13" fill="#fff"/><rect x="911" y="114" width="11" height="1" fill="#d4d0c8"/><rect x="921" y="104" width="1" height="11" fill="#d4d0c8"/><g fill="#000"><rect x="919" y="106" width="1" height="1"/><rect x="918" y="107" width="1" height="1"/><rect x="919" y="107" width="1" height="1"/><rect x="913" y="108" width="1" height="1"/><rect x="917" y="108" width="1" height="1"/><rect x="918" y="108" width="1" height="1"/><rect x="919" y="108" width="1" height="1"/><rect x="913" y="109" width="1" height="1"/><rect x="914" y="109" width="1" height="1"/><rect x="916" y="109" width="1" height="1"/><rect x="917" y="109" width="1" height="1"/><rect x="918" y="109" width="1" height="1"/><rect x="913" y="110" width="1" height="1"/><rect x="914" y="110" width="1" height="1"/><rect x="915" y="110" width="1" height="1"/><rect x="916" y="110" width="1" height="1"/><rect x="917" y="110" width="1" height="1"/><rect x="914" y="111" width="1" height="1"/><rect x="915" y="111" width="1" height="1"/><rect x="916" y="111" width="1" height="1"/><rect x="915" y="112" width="1" height="1"/></g><rect x="692" y="142" width="51" height="20" fill="#fff"/><rect x="692" y="142" width="50" height="1" fill="#808080"/><rect x="692" y="142" width="1" height="19" fill="#808080"/><rect x="693" y="143" width="48" height="1" fill="#404040"/><rect x="693" y="143" width="1" height="17" fill="#404040"/><rect x="692" y="161" width="51" height="1" fill="#fff"/><rect x="742" y="142" width="1" height="20" fill="#fff"/><rect x="693" y="160" width="49" height="1" fill="#d4d0c8"/><rect x="741" y="143" width="1" height="18" fill="#d4d0c8"/><rect x="791" y="145" width="13" height="13" fill="#fff"/><rect x="791" y="145" width="12" height="1" fill="#808080"/><rect x="791" y="145" width="1" height="12" fill="#808080"/><rect x="792" y="146" width="10" height="1" fill="#404040"/><rect x="792" y="146" width="1" height="10" fill="#404040"/><rect x="791" y="157" width="13" height="1" fill="#fff"/><rect x="803" y="145" width="1" height="13" fill="#fff"/><rect x="792" y="156" width="11" height="1" fill="#d4d0c8"/><rect x="802" y="146" width="1" height="11" fill="#d4d0c8"/><g fill="#000"><rect x="800" y="148" width="1" height="1"/><rect x="799" y="149" width="1" height="1"/><rect x="800" y="149" width="1" height="1"/><rect x="794" y="150" width="1" height="1"/><rect x="798" y="150" width="1" height="1"/><rect x="799" y="150" width="1" height="1"/><rect x="800" y="150" width="1" height="1"/><rect x="794" y="151" width="1" height="1"/><rect x="795" y="151" width="1" height="1"/><rect x="797" y="151" width="1" height="1"/><rect x="798" y="151" width="1" height="1"/><rect x="799" y="151" width="1" height="1"/><rect x="794" y="152" width="1" height="1"/><rect x="795" y="152" width="1" height="1"/><rect x="796" y="152" width="1" height="1"/><rect x="797" y="152" width="1" height="1"/><rect x="798" y="152" width="1" height="1"/><rect x="795" y="153" width="1" height="1"/><rect x="796" y="153" width="1" height="1"/><rect x="797" y="153" width="1" height="1"/><rect x="796" y="154" width="1" height="1"/></g><rect x="909" y="133" width="98" height="38" fill="#c00000"/><rect x="910" y="134" width="96" height="36" fill="#d4d0c8"/><rect x="910" y="134" width="95" height="1" fill="#fff"/><rect x="910" y="134" width="1" height="35" fill="#fff"/><rect x="911" y="135" width="93" height="1" fill="#d4d0c8"/><rect x="911" y="135" width="1" height="33" fill="#d4d0c8"/><rect x="910" y="169" width="96" height="1" fill="#404040"/><rect x="1005" y="134" width="1" height="36" fill="#404040"/><rect x="911" y="168" width="94" height="1" fill="#808080"/><rect x="1004" y="135" width="1" height="34" fill="#808080"/>
</svg>
<div class="t tb" style="left:589.00px;top:17px;font-size:11px;font-weight:700;color:#fff;transform:scaleX(1.0804)">Compare two spectra</div><div class="t" style="left:597.12px;top:56px;font-size:12px;font-weight:400;color:#000;transform:scaleX(0.8833)">Compare to spectrum :</div><div class="t" style="left:719.00px;top:56px;font-size:12px;font-weight:400;color:#000;transform:scaleX(0.9152)">0820_LHires15_bin1\13_vvcep\mucep_sh</div><div class="t" style="left:1015.00px;top:57px;font-size:12px;font-weight:400;color:#000;transform:scaleX(1.0000)">R</div><div class="t" style="left:600.00px;top:99px;font-size:12px;font-weight:400;color:#000;transform:scaleX(0.8947)">Threshold up ;</div><div class="t" style="left:695.00px;top:99px;font-size:12px;font-weight:400;color:#000;transform:scaleX(1.0000)">3</div><div class="t" style="left:767.07px;top:99px;font-size:12px;font-weight:400;color:#000;transform:scaleX(0.9310)">Shift :</div><div class="t" style="left:808.00px;top:99px;font-size:12px;font-weight:400;color:#000;transform:scaleX(1.0000)">0</div><div class="t" style="left:856.96px;top:99px;font-size:12px;font-weight:400;color:#000;transform:scaleX(1.0417)">km/s</div><div class="t" style="left:930.00px;top:101px;font-size:12px;font-weight:400;color:#000;transform:scaleX(0.9268)">Velocity</div><div class="t" style="left:600.00px;top:142px;font-size:12px;font-weight:400;color:#000;transform:scaleX(0.9011)">Threshold down ;</div><div class="t" style="left:695.00px;top:142px;font-size:12px;font-weight:400;color:#000;transform:scaleX(1.0000)">0</div><div class="t" style="left:810.12px;top:143px;font-size:12px;font-weight:400;color:#000;transform:scaleX(0.8824)">Display the ratio</div><div class="t" style="left:934.10px;top:142px;font-size:12px;font-weight:400;color:#c00000;transform:scaleX(0.8958)">Compare</div><div class="t" style="left:10.00px;top:616px;font-size:12px;font-weight:400;color:#000;transform:scaleX(0.9247)">c:\csill\428exm\20170820_lhires15_bin1\13_vvcep\asdb_vvcep_201708:</div><div class="t" style="left:369.00px;top:616px;font-size:12px;font-weight:400;color:#000;transform:scaleX(0.8537)">VV Cep</div><div class="t" style="left:408.00px;top:616px;font-size:12px;font-weight:400;color:#000;transform:scaleX(1.0000)">t</div><div class="t" style="left:535.09px;top:616px;font-size:12px;font-weight:400;color:#000;transform:scaleX(0.9123)">2017-08-20T20:58:08</div><div class="t" style="left:687.00px;top:616px;font-size:12px;font-weight:400;color:#000;transform:scaleX(0.8983)">4198.001 s</div><div class="t" style="left:10.00px;top:644px;font-size:12px;font-weight:400;color:#000;transform:scaleX(0.9275)">Wavelength :</div><div class="t" style="left:108.06px;top:644px;font-size:12px;font-weight:400;color:#000;transform:scaleX(0.9388)">6540.008</div><div class="t" style="left:194.08px;top:644px;font-size:12px;font-weight:400;color:#000;transform:scaleX(0.9184)">Intensity :</div><div class="t" style="left:254.10px;top:644px;font-size:12px;font-weight:400;color:#000;transform:scaleX(0.8980)">1.313540</div><div class="t" style="left:425.00px;top:645px;font-size:12px;font-weight:400;color:#000;transform:scaleX(0.8774)">Automatic threshold</div><div class="t" style="left:553.07px;top:644px;font-size:12px;font-weight:400;color:#000;transform:scaleX(0.9298)">High level :</div><div class="t" style="left:620.00px;top:644px;font-size:12px;font-weight:400;color:#000;transform:scaleX(1.0000)">3</div><div class="t" style="left:687.07px;top:644px;font-size:12px;font-weight:400;color:#000;transform:scaleX(0.9273)">Low level :</div><div class="t" style="left:750.00px;top:644px;font-size:12px;font-weight:400;color:#000;transform:scaleX(1.0000)">0</div>
</body></html>
